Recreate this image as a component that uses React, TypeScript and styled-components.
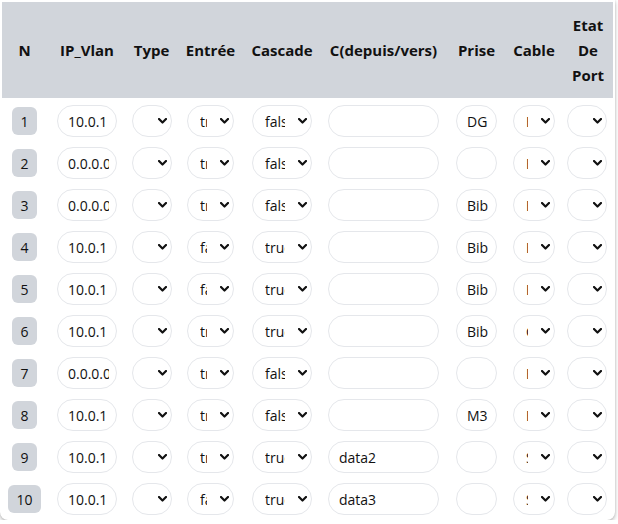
import React from "react";
import styled, { createGlobalStyle } from "styled-components";

const Global = createGlobalStyle`
  html, body { margin: 0; padding: 0; background: #ffffff; }
  body { font-family: "Open Sans", "Noto Sans", sans-serif; color: #111111; }
`;

const Card = styled.div`
  width: 615px;
  box-sizing: border-box;
  padding: 0 2px;
  background: #ffffff;
  border-radius: 0 0 8px 8px;
  box-shadow: 0 2px 4px rgba(0, 0, 0, 0.28), 0 0 2px rgba(0, 0, 0, 0.12);
`;

const Table = styled.table`
  width: 611px;
  table-layout: fixed;
  border-collapse: separate;
  border-spacing: 0 2px;
`;

const HeadRow = styled.tr`
  background: #d1d5db;
`;

const Th = styled.th`
  height: 96px;
  padding: 0 4px;
  box-sizing: border-box;
  background: #d1d5db;
  font-size: 15px;
  font-weight: 700;
  line-height: 25px;
  text-align: center;
  vertical-align: middle;
  color: #111111;
  white-space: normal;
`;

const Td = styled.td<{ $end?: boolean }>`
  height: 40px;
  padding: ${(p) => (p.$end ? "2px 6px 0 0" : "2px 0 0")};
  box-sizing: border-box;
  text-align: ${(p) => (p.$end ? "right" : "center")};
  vertical-align: middle;
`;

const Badge = styled.span`
  display: inline-flex;
  align-items: center;
  justify-content: center;
  height: 28px;
  padding: 0 8px;
  border-radius: 6px;
  background: #d1d5db;
  font-size: 14px;
  color: #111111;
`;

const Pill = styled.input<{ $w: number }>`
  width: ${(p) => p.$w}px;
  height: 32px;
  box-sizing: border-box;
  border: 1px solid #e5e7eb;
  border-radius: 9999px;
  padding: 0 7px 0 10px;
  font-family: "Open Sans", sans-serif;
  font-size: 14px;
  color: #111111;
  background: #ffffff;
  outline: none;
  vertical-align: middle;
`;

const SelectWrap = styled.span`
  position: relative;
  display: inline-block;
  vertical-align: middle;
`;

const Select = styled.select<{ $w: number }>`
  appearance: none;
  -webkit-appearance: none;
  display: block;
  width: ${(p) => p.$w}px;
  height: 32px;
  box-sizing: border-box;
  border: 1px solid #e5e7eb;
  border-radius: 9999px;
  padding: 0 26px 0 12px;
  font-family: "Open Sans", sans-serif;
  font-size: 14px;
  color: #111111;
  background: #ffffff;
  outline: none;
  overflow: hidden;
`;

const Chevron = styled.svg`
  position: absolute;
  right: 5px;
  top: 50%;
  margin-top: -3px;
  width: 9px;
  height: 6px;
  pointer-events: none;
`;

type Row = {
  ip: string;
  entree: string;
  cascade: string;
  c: string;
  prise: string;
  cable: string;
};

const rows: Row[] = [
  { ip: "10.0.1", entree: "true", cascade: "false", c: "", prise: "DG", cable: "Bureau" },
  { ip: "0.0.0.0", entree: "true", cascade: "false", c: "", prise: "", cable: "Bureau" },
  { ip: "0.0.0.0", entree: "true", cascade: "false", c: "", prise: "Bib", cable: "Bureau" },
  { ip: "10.0.1", entree: "false", cascade: "true", c: "", prise: "Bib", cable: "Bureau" },
  { ip: "10.0.1", entree: "false", cascade: "true", c: "", prise: "Bib", cable: "Bureau" },
  { ip: "10.0.1", entree: "true", cascade: "true", c: "", prise: "Bib", cable: "Cuivre" },
  { ip: "0.0.0.0", entree: "true", cascade: "false", c: "", prise: "", cable: "Bureau" },
  { ip: "10.0.1", entree: "true", cascade: "false", c: "", prise: "M3", cable: "Bureau" },
  { ip: "10.0.1", entree: "true", cascade: "true", c: "data2", prise: "", cable: "Switch" },
  { ip: "10.0.1", entree: "false", cascade: "true", c: "data3", prise: "", cable: "Switch" },
];

const colWidths = [45, 80, 49, 69, 74, 129, 57, 58, 50];

const Dropdown: React.FC<{ w: number; value: string }> = ({ w, value }) => (
  <SelectWrap>
    <Select $w={w} defaultValue={value}>
      <option value="">{""}</option>
      {value ? <option value={value}>{value}</option> : null}
    </Select>
    <Chevron viewBox="0 0 9 6">
      <path d="M1 1 L4.5 4.5 L8 1" fill="none" stroke="#111" strokeWidth="2.2" strokeLinecap="round" strokeLinejoin="round" />
    </Chevron>
  </SelectWrap>
);

export default function App() {
  return (
    <>
      <Global />
      <Card>
        <Table>
          <colgroup>
            {colWidths.map((w, i) => (
              <col key={i} style={{ width: w }} />
            ))}
          </colgroup>
          <thead>
            <HeadRow>
              <Th>N</Th>
              <Th>IP_Vlan</Th>
              <Th>Type</Th>
              <Th>Entrée</Th>
              <Th>Cascade</Th>
              <Th>C(depuis/vers)</Th>
              <Th>Prise</Th>
              <Th>Cable</Th>
              <Th>Etat De Port</Th>
            </HeadRow>
          </thead>
          <tbody>
            {rows.map((r, i) => (
              <tr key={i}>
                <Td>
                  <Badge>{i + 1}</Badge>
                </Td>
                <Td>
                  <Pill $w={60} defaultValue={r.ip} />
                </Td>
                <Td>
                  <Dropdown w={37} value="" />
                </Td>
                <Td>
                  <Dropdown w={47} value={r.entree} />
                </Td>
                <Td>
                  <Dropdown w={60} value={r.cascade} />
                </Td>
                <Td>
                  <Pill $w={111} defaultValue={r.c} />
                </Td>
                <Td>
                  <Pill $w={41} defaultValue={r.prise} />
                </Td>
                <Td>
                  <Dropdown w={42} value={r.cable} />
                </Td>
                <Td $end>
                  <Dropdown w={36} value="" />
                </Td>
              </tr>
            ))}
          </tbody>
        </Table>
      </Card>
    </>
  );
}
